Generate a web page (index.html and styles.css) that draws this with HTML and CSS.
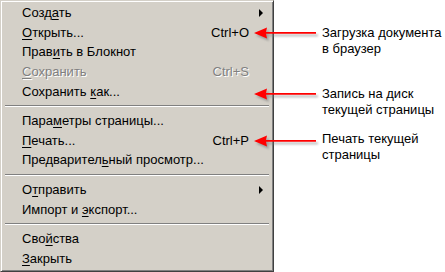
FILE: index.html
```html
<!DOCTYPE html>
<html>
<head>
<meta charset="utf-8">
<link rel="stylesheet" href="styles.css">
</head>
<body>
<div class="page">
  <div class="menu">
    <div class="item"><span><span>Созд</span><u>а</u><span>ть</span></span><span class="sub"></span></div>
    <div class="item"><span><u>О</u>ткрыть...</span><span class="key">Ctrl+O</span></div>
    <div class="item"><span>Прав<u>и</u>ть в Блокнот</span></div>
    <div class="item disabled"><span><u>С</u>охранить</span><span class="key">Ctrl+S</span></div>
    <div class="item"><span>Сохранить <u>к</u>ак...</span></div>
    <div class="sep"></div>
    <div class="item"><span>Пара<u>м</u>етры страницы...</span></div>
    <div class="item"><span><u>П</u>ечать...</span><span class="key">Ctrl+P</span></div>
    <div class="item"><span>Предварител<u>ь</u>ный просмотр...</span></div>
    <div class="sep"></div>
    <div class="item"><span>О<u>т</u>править</span><span class="sub"></span></div>
    <div class="item"><span>Импорт и <u>э</u>кспорт...</span></div>
    <div class="sep"></div>
    <div class="item"><span>Сво<u>й</u>ства</span></div>
    <div class="item"><span><u>З</u>акрыть</span></div>
  </div>

  <div class="note note1">Загрузка документа<br>в браузер</div>
  <div class="note note2">Запись на диск<br>текущей страницы</div>
  <div class="note note3">Печать текущей<br>страницы</div>

  <svg class="arrows" width="445" height="272" viewBox="0 0 445 272">
    <defs>
      <g id="arr">
        <path d="M0 0 L13 -5.5 L12 -1 L62 -1 L62 0.8 L12 0.8 L13 5.5 Z"/>
      </g>
      <filter id="blur" x="-10%" y="-50%" width="120%" height="200%">
        <feGaussianBlur stdDeviation="1.2"/>
      </filter>
    </defs>
    <g fill="#7a7a7a" opacity="0.6" filter="url(#blur)">
      <use href="#arr" x="256" y="35.5"/>
      <use href="#arr" x="256" y="96.5"/>
      <use href="#arr" x="256" y="143.5"/>
    </g>
    <g fill="#ff0000">
      <use href="#arr" x="254" y="33"/>
      <use href="#arr" x="254" y="94"/>
      <use href="#arr" x="254" y="141"/>
    </g>
  </svg>
</div>
</body>
</html>
```

FILE: styles.css
```css
html, body {
  margin: 0;
  padding: 0;
  background: #ffffff;
}

.page {
  position: relative;
  width: 445px;
  height: 272px;
  overflow: hidden;
  font-family: "Liberation Sans", Arial, sans-serif;
}

.menu {
  box-sizing: border-box;
  width: 274px;
  height: 272px;
  background: #d4d0c8;
  border: 1px solid;
  border-color: #d4d0c8 #404040 #404040 #d4d0c8;
  box-shadow: inset 1px 1px 0 #ffffff, inset -1px -1px 0 #808080;
  padding: 2px 2px;
  display: flex;
  flex-direction: column;
  font-size: 13px;
  color: #000000;
}

.item {
  height: 19.6px;
  display: flex;
  align-items: center;
  justify-content: space-between;
  padding-left: 19px;
  padding-right: 22px;
  position: relative;
  white-space: nowrap;
}

.item u {
  text-decoration: underline;
  text-underline-offset: 2px;
}

.key {
  text-align: right;
}

.disabled {
  color: #808080;
  text-shadow: 1px 1px 0 #ffffff;
}

.sub {
  width: 0;
  height: 0;
  border-top: 4px solid transparent;
  border-bottom: 4px solid transparent;
  border-left: 4px solid #000000;
  margin-right: -14px;
}

.sep {
  height: 10px;
  display: flex;
  align-items: center;
  padding: 0 2px;
}

.sep::before {
  content: "";
  flex: 1;
  height: 0;
  border-top: 1px solid #808080;
  border-bottom: 1px solid #ffffff;
}

.note {
  position: absolute;
  left: 322px;
  font-size: 13px;
  line-height: 16px;
  color: #000000;
  white-space: nowrap;
}

.note1 { top: 25px; }
.note2 { top: 86px; }
.note3 { top: 131px; }

.arrows {
  position: absolute;
  left: 0;
  top: 0;
}
```
